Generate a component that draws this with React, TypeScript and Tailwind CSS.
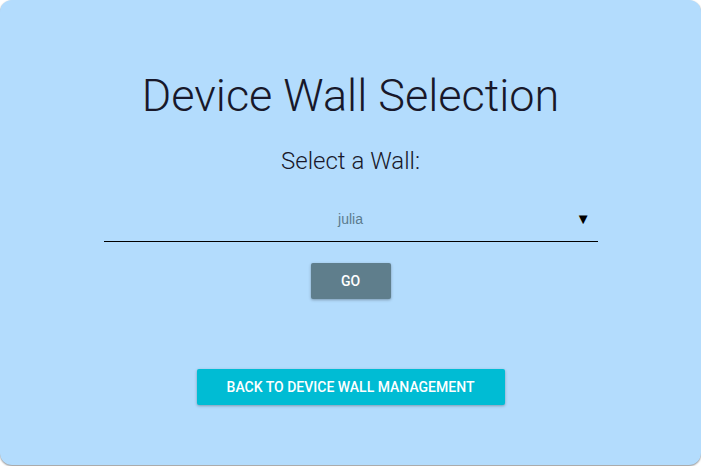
export default function App() {
  return (
    <div className="w-[701px] h-[466px] bg-white overflow-hidden">
      <div
        className="h-[465px] rounded-[12px] bg-[#b3dcfd] shadow-[0_1px_2px_rgba(0,0,0,0.45)] flex flex-col items-center pt-[69px]"
        style={{ fontFamily: 'Roboto, "Liberation Sans", sans-serif' }}
      >
        <h1 className="text-[45px] leading-[53px] font-light text-[#18182a]">Device Wall Selection</h1>
        <p className="mt-[25px] text-[24px] leading-[28px] font-light text-[#18182a]">Select a Wall:</p>

        <div className="mt-[26px] w-[494px] h-[41px] pb-[4px] border-b border-black flex items-center relative">
          <span
            className="flex-1 text-center text-[14px] text-[#5b7b8d]"
            style={{ fontFamily: '"Liberation Sans", Arial, sans-serif' }}
          >
            julia
          </span>
          <span className="absolute right-[7px] top-[11px] text-[15px] leading-none text-black">▼</span>
        </div>

        <button className="mt-[21px] w-[80px] h-[36px] rounded-[2px] bg-[#5f7e8c] text-white text-[14px] font-medium shadow-[0_1px_3px_rgba(0,0,0,0.3)]">
          GO
        </button>

        <button className="mt-[70px] w-[308px] h-[36px] rounded-[2px] bg-[#00bcd4] text-white text-[14px] font-medium uppercase shadow-[0_1px_3px_rgba(0,0,0,0.3)]">
          Back to Device Wall Management
        </button>
      </div>
    </div>
  )
}
